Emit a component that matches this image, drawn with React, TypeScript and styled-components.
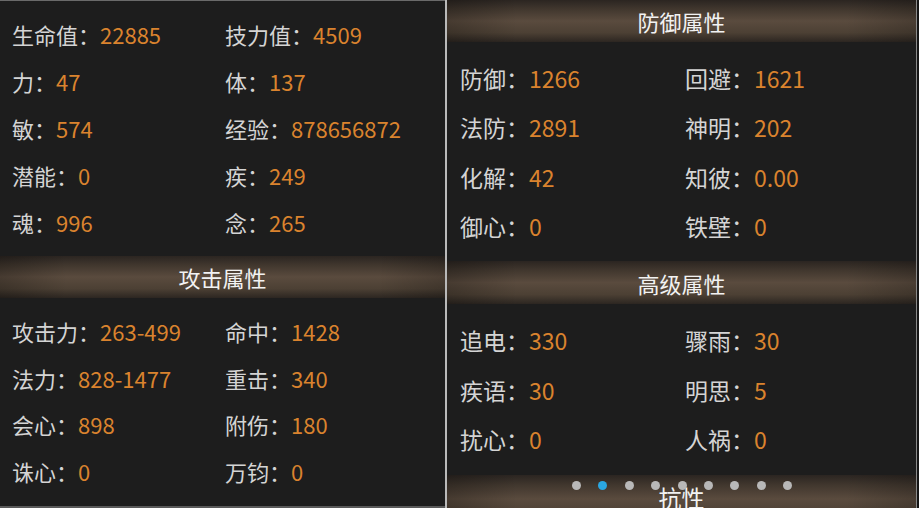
import React from "react";
import styled, { createGlobalStyle } from "styled-components";

const Global = createGlobalStyle`
  html, body { margin: 0; padding: 0; background: #151515; }
  body { font-family: "Noto Sans CJK SC", "Noto Sans", sans-serif; }
  * { box-sizing: border-box; }
`;

const Page = styled.div`
  display: flex;
  width: 919px;
  height: 508px;
  overflow: hidden;
  background: #151515;
`;

const Panel = styled.div<{ $w: number; $size: number }>`
  width: ${(p) => p.$w}px;
  height: 508px;
  flex: none;
  background: #1d1d1d;
  font-size: ${(p) => p.$size}px;
  position: relative;
  overflow: hidden;
  display: flex;
  flex-direction: column;
`;

const LeftPanel = styled(Panel)`
  border-top: 1px solid #6a6a6a;
  border-bottom: 2px solid #5a5a5a;
  padding-top: 10px;
`;

const Divider = styled.div`
  width: 2px;
  flex: none;
  background: #b9b9b9;
`;

const RightPanel = styled(Panel)`
  border-right: 1px solid #8a8a8a;
`;

const Grid = styled.div<{ $rowH: number; $pad: number; $col: number; $mt: number }>`
  display: grid;
  grid-template-columns: ${(p) => p.$col}px 1fr;
  grid-auto-rows: ${(p) => p.$rowH}px;
  padding-left: ${(p) => p.$pad}px;
  margin-top: ${(p) => p.$mt}px;
`;

const Cell = styled.div`
  display: flex;
  align-items: center;
  white-space: nowrap;
  line-height: 1;
`;

const Label = styled.span`
  color: #d4d4d4;
`;

const Value = styled.span`
  color: #da832e;
`;

const bandBg = `
  linear-gradient(to right, rgba(0,0,0,0.22), rgba(0,0,0,0) 15%, rgba(0,0,0,0) 85%, rgba(0,0,0,0.18)),
  linear-gradient(to bottom, #2b2521 0%, #41372e 22%, #5a4b3e 50%, #4c4034 78%, #2c2621 100%)
`;

const Band = styled.div<{ $h: number; $mt: number }>`
  height: ${(p) => p.$h}px;
  margin-top: ${(p) => p.$mt}px;
  flex: none;
  display: flex;
  align-items: center;
  justify-content: center;
  color: #f2f2f2;
  font-size: 22px;
  position: relative;
  background: ${bandBg};
`;

const BottomBand = styled.div`
  position: absolute;
  left: 0;
  right: 0;
  top: 475px;
  height: 40px;
  background:
    linear-gradient(to right, rgba(0,0,0,0.22), rgba(0,0,0,0) 15%, rgba(0,0,0,0) 85%, rgba(0,0,0,0.18)),
    linear-gradient(to bottom, #2b2521 0%, #41372e 25%, #5a4b3e 60%, #4c4034 100%);
  display: flex;
  justify-content: center;
  color: #f2f2f2;
  font-size: 23px;
  line-height: 1;
  padding-top: 11px;
`;

const Dots = styled.div`
  position: absolute;
  top: 481px;
  left: 0;
  right: 0;
  display: flex;
  justify-content: center;
  gap: 17.4px;
  padding-left: 1px;
  z-index: 2;
`;

const Dot = styled.span<{ $active?: boolean }>`
  width: 9px;
  height: 9px;
  border-radius: 50%;
  background: ${(p) => (p.$active ? "#2aa7e2" : "#b8b8b8")};
`;

type Pair = [string, string];

const StatGrid = ({ rows, rowH, pad, col, mt }: { rows: Pair[]; rowH: number; pad: number; col: number; mt: number }) => (
  <Grid $rowH={rowH} $pad={pad} $col={col} $mt={mt}>
    {rows.map(([k, v], i) => (
      <Cell key={i}>
        <Label>{k}：</Label>
        <Value>{v}</Value>
      </Cell>
    ))}
  </Grid>
);

const left1: Pair[] = [
  ["生命值", "22885"], ["技力值", "4509"],
  ["力", "47"], ["体", "137"],
  ["敏", "574"], ["经验", "878656872"],
  ["潜能", "0"], ["疾", "249"],
  ["魂", "996"], ["念", "265"],
];
const left2: Pair[] = [
  ["攻击力", "263-499"], ["命中", "1428"],
  ["法力", "828-1477"], ["重击", "340"],
  ["会心", "898"], ["附伤", "180"],
  ["诛心", "0"], ["万钧", "0"],
];
const right1: Pair[] = [
  ["防御", "1266"], ["回避", "1621"],
  ["法防", "2891"], ["神明", "202"],
  ["化解", "42"], ["知彼", "0.00"],
  ["御心", "0"], ["铁壁", "0"],
];
const right2: Pair[] = [
  ["追电", "330"], ["骤雨", "30"],
  ["疾语", "30"], ["明思", "5"],
  ["扰心", "0"], ["人祸", "0"],
];

export default function App() {
  return (
    <>
      <Global />
      <Page>
        <LeftPanel $w={445} $size={22}>
          <StatGrid rows={left1} rowH={46.8} pad={12} col={213} mt={0} />
          <Band $h={42} $mt={11}>攻击属性</Band>
          <StatGrid rows={left2} rowH={46.6} pad={12} col={213} mt={10} />
        </LeftPanel>
        <Divider />
        <RightPanel $w={470} $size={23}>
          <Band $h={42} $mt={0}>防御属性</Band>
          <StatGrid rows={right1} rowH={49.3} pad={13} col={225} mt={12} />
          <Band $h={43} $mt={10}>高级属性</Band>
          <StatGrid rows={right2} rowH={49.3} pad={13} col={225} mt={12} />
          <BottomBand>抗性</BottomBand>
          <Dots>
            {Array.from({ length: 9 }).map((_, i) => (
              <Dot key={i} $active={i === 1} />
            ))}
          </Dots>
        </RightPanel>
      </Page>
    </>
  );
}
